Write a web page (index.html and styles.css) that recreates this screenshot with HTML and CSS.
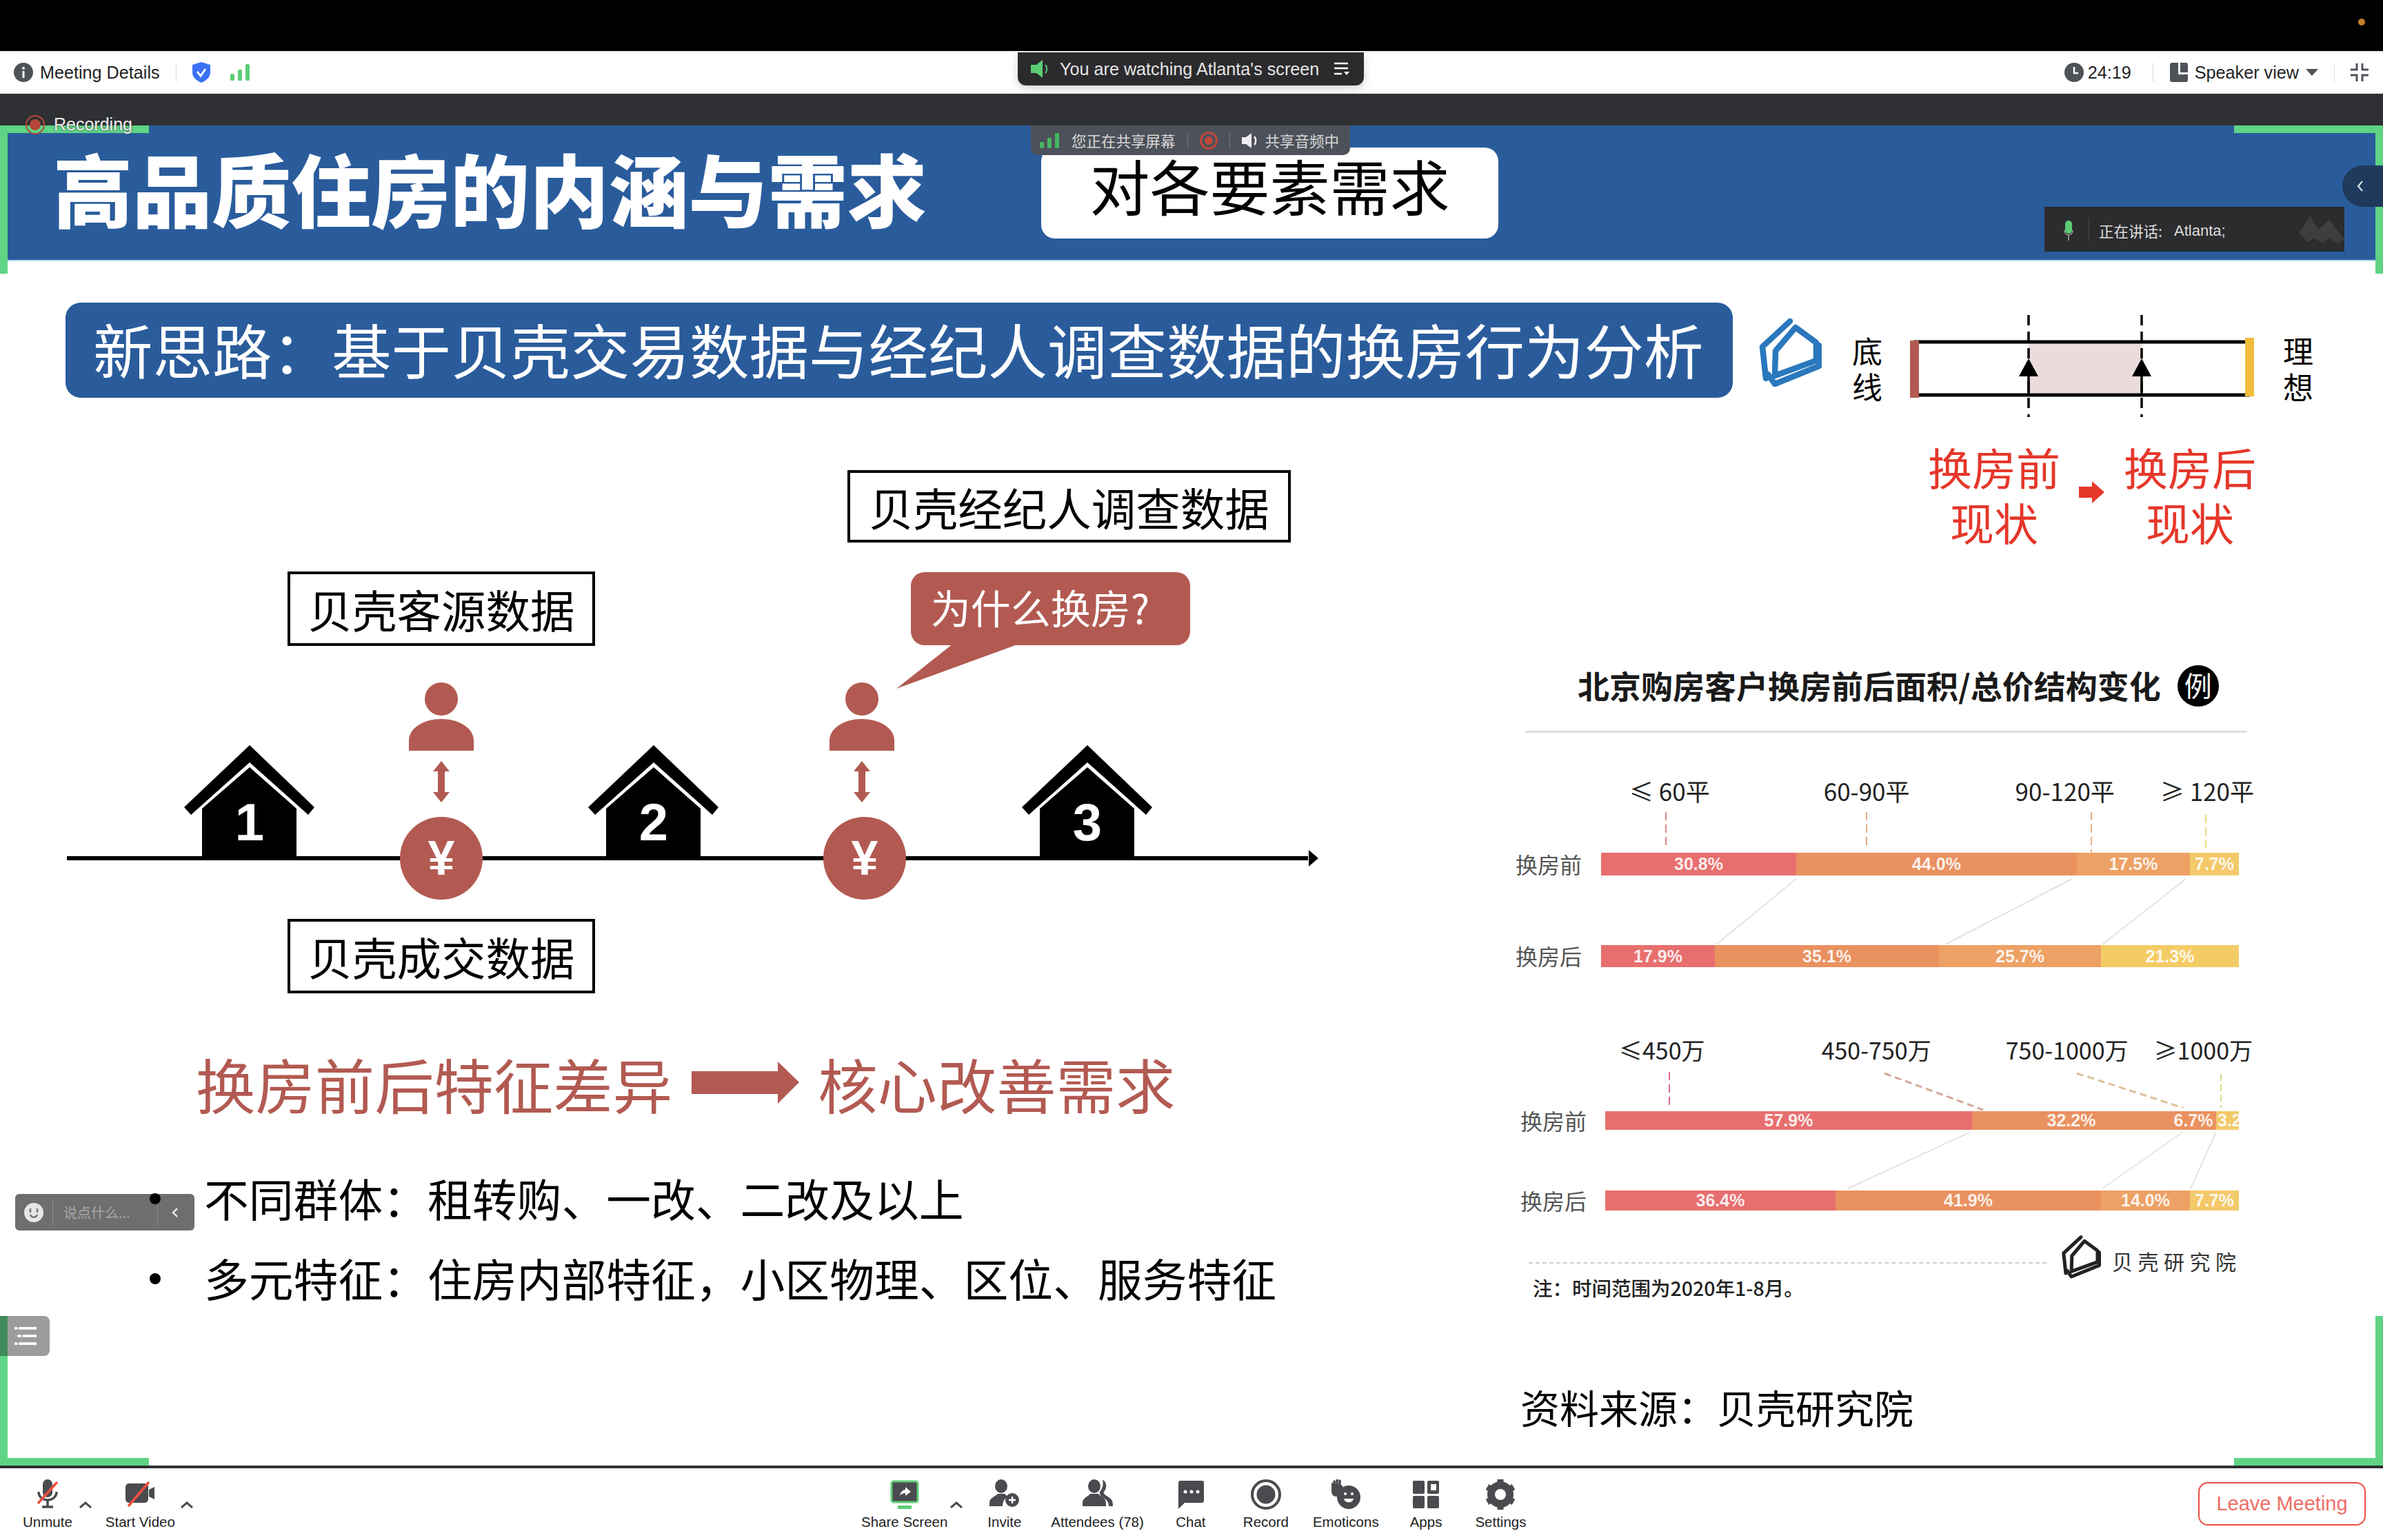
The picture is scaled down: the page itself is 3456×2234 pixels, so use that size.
FILE: index.html
```html
<!DOCTYPE html>
<html>
	<head>
		<meta charset="utf-8">
		<title>Meeting</title>
		<link rel="stylesheet" href="styles.css">
	</head>
	<body>
		<div class="menubar"><span class="cam-dot"></span></div>

		<div class="topbar">
			<div class="top-left">
				<svg class="ico-28" viewBox="0 0 28 28"><circle cx="14" cy="14" r="14" fill="#4f5259"/><rect x="12.5" y="12" width="3" height="10" fill="#fff"/><circle cx="14" cy="8" r="2" fill="#fff"/></svg>
				<span class="top-text details">Meeting Details</span>
				<span class="top-sep"></span>
				<svg class="ico-28 shield" viewBox="0 0 28 30"><path d="M14 0l13 4v11c0 7-6 12-13 15C7 27 1 22 1 15V4z" fill="#3b72f5"/><path d="M8 14l5 6 7-10" fill="none" stroke="#fff" stroke-width="3"/></svg>
				<svg class="ico-28 signal" viewBox="0 0 28 24"><rect x="0" y="14" width="6" height="10" rx="2" fill="#5ccd75"/><rect x="11" y="8" width="6" height="16" rx="2" fill="#5ccd75"/><rect x="22" y="0" width="6" height="24" rx="2" fill="#5ccd75"/></svg>
			</div>
			<div class="watching">
				<svg class="watch-spk" viewBox="0 0 28 26"><path d="M0 7h8l9-7v26l-9-7H0z" fill="#5ccd75"/><path d="M21 7c3 3 3 9 0 12" fill="none" stroke="#5ccd75" stroke-width="2"/></svg>
				<span class="watch-text">You are watching Atlanta's screen</span>
				<svg class="watch-menu" viewBox="0 0 24 20"><path d="M2 2h20M2 9h20M2 17h11" stroke="#fff" stroke-width="2.5"/><path d="M16 14h8l-4 5z" fill="#fff"/></svg>
			</div>
			<div class="top-right">
				<svg class="ico-28" viewBox="0 0 28 28"><circle cx="14" cy="14" r="14" fill="#4f5259"/><path d="M14 6v9h6" fill="none" stroke="#fff" stroke-width="2.5"/></svg>
				<span class="top-text clock">24:19</span>
				<span class="top-sep sep-clock"></span>
				<svg class="ico-28 view-ico" viewBox="0 0 26 28"><rect width="26" height="28" rx="3" fill="#4f5259"/><path d="M12 0h3v14h11v3H12z" fill="#fff"/></svg>
				<span class="top-text view">Speaker view</span>
				<span class="view-caret"></span>
				<span class="top-sep sep-view"></span>
				<svg class="ico-28 exit-full" viewBox="0 0 28 28"><path d="M10 1v9H1M18 1v9h9M10 27V18H1M18 27V18h9" fill="none" stroke="#4f5259" stroke-width="3"/></svg>
			</div>
		</div>

		<div class="strip"></div>

		<div class="stage">
			<div class="slide-head">
				<h1 class="slide-title">高品质住房的内涵与需求</h1>
				<div class="slide-pill">对各要素需求</div>
			</div>

			<div class="idea-row">
				<div class="idea-banner">新思路：基于贝壳交易数据与经纪人调查数据的换房行为分析</div>
				<svg class="beike-logo" viewBox="0 0 92 100">
					<g fill="none" stroke="#2a78bd" stroke-width="8.500" stroke-linejoin="round" stroke-linecap="round">
						<path d="M46 5L6 42l5 46"/>
						<path d="M54 14L84 36V62L24 84 25 48z"/>
						<path d="M14 82l10 14 64-26V40"/>
					</g>
				</svg>
				<div class="gauge-word word-low">底<br>线</div>
				<svg class="gauge" viewBox="2765 439 510 138">
					<rect x="2941" y="497" width="164" height="74" fill="#ebdcdc"/>
					<path d="M2775 496H3262M2775 573H3262" stroke="#000" stroke-width="5"/>
					<rect x="2769" y="494" width="13" height="83" fill="#b25a52"/>
					<rect x="3255" y="490" width="13" height="85" fill="#f2bc3b"/>
					<path d="M2941 457V605M3105 457V605" stroke="#000" stroke-width="3.5" stroke-dasharray="15 9"/>
					<path d="M2941 546V573M3105 546V573" stroke="#000" stroke-width="3.5"/>
					<path d="M2941 520l14 26h-28zM3105 520l14 26h-28z" fill="#000"/>
				</svg>
				<div class="gauge-word word-high">理<br>想</div>
			</div>

			<div class="slide-body">
				<div class="left-col">
					<div class="timeline">
						<svg class="timeline-art" viewBox="0 577 2190 864">
							<defs>
								<g id="house">
									<path d="M0 0L94 90 85 101 0 25-85 101-95 90z" fill="#000"/>
									<path d="M0 32L68 92V163H-69V92z" fill="#000"/>
								</g>
								<g id="person">
									<ellipse cx="0" cy="0" rx="24" ry="24" fill="#b25a52"/>
									<path d="M-47 75V60C-47 42-25 29 0 29S47 42 47 60V75z" fill="#b25a52"/>
								</g>
								<path id="updown" d="M0 0l12 15H5V45H12L0 60-12 45H-5V15H-12z" fill="#b25a52"/>
							</defs>
							<path d="M97 1245H1897" stroke="#000" stroke-width="6"/>
							<path d="M1912 1245l-14-12v24z" fill="#000"/>
							<use href="#house" x="362" y="1081"/>
							<use href="#house" x="948" y="1081"/>
							<use href="#house" x="1577" y="1081"/>
							<text class="house-num" x="362" y="1219">1</text>
							<text class="house-num" x="948" y="1219">2</text>
							<text class="house-num" x="1577" y="1219">3</text>
							<use href="#person" x="640" y="1014"/>
							<use href="#person" x="1250" y="1014"/>
							<use href="#updown" x="640" y="1104"/>
							<use href="#updown" x="1250" y="1104"/>
							<circle cx="640" cy="1245" r="60" fill="#b25a52"/>
							<circle cx="1254" cy="1245" r="60" fill="#b25a52"/>
							<text class="yen" x="640" y="1269">¥</text>
							<text class="yen" x="1254" y="1269">¥</text>
							<path d="M1387 930L1300 999 1489 930z" fill="#b25a52"/>
						</svg>
						<div class="data-box box-agent">贝壳经纪人调查数据</div>
						<div class="data-box box-client">贝壳客源数据</div>
						<div class="data-box box-deal">贝壳成交数据</div>
						<div class="bubble">为什么换房?</div>
					</div>

					<div class="gap-line">
						<span>换房前后特征差异</span>
						<svg class="gap-arrow" viewBox="0 0 156 61"><path d="M0 14H125V0L156 30 125 61V47H0z" fill="#b25a52"/></svg>
						<span>核心改善需求</span>
					</div>

					<ul class="points">
						<li>不同群体：租转购、一改、二改及以上</li>
						<li>多元特征：住房内部特征，小区物理、区位、服务特征</li>
					</ul>
				</div>

				<div class="right-col">
					<div class="change-row">
						<div class="change-word">换房前<br>现状</div>
						<svg class="change-arrow" viewBox="0 0 37 32"><path d="M0 8H19V0L37 16 19 32V24H0z" fill="#e5372a"/></svg>
						<div class="change-word">换房后<br>现状</div>
					</div>

					<div class="chart-title">
						<span class="chart-name">北京购房客户换房前后面积/总价结构变化</span>
						<span class="chart-badge">例</span>
					</div>
					<div class="chart-rule"></div>

					<div class="range-row ranges-area">
						<span>≤ 60平</span><span>60-90平</span><span>90-120平</span><span>≥ 120平</span>
					</div>
					<div class="bar-row row-a1">
						<span class="bar-name">换房前</span>
						<div class="bar">
							<span class="seg c1" style="width:283px">30.8%</span>
							<span class="seg c2" style="width:407px">44.0%</span>
							<span class="seg c3" style="width:164px">17.5%</span>
							<span class="seg c4" style="width:71px">7.7%</span>
						</div>
					</div>
					<div class="bar-row row-a2">
						<span class="bar-name">换房后</span>
						<div class="bar">
							<span class="seg c1" style="width:165px">17.9%</span>
							<span class="seg c2" style="width:325px">35.1%</span>
							<span class="seg c3" style="width:235px">25.7%</span>
							<span class="seg c5" style="width:200px">21.3%</span>
						</div>
					</div>

					<div class="range-row ranges-price">
						<span>≤450万</span><span>450-750万</span><span>750-1000万</span><span>≥1000万</span>
					</div>
					<div class="bar-row bar-narrow row-b1">
						<span class="bar-name">换房前</span>
						<div class="bar">
							<span class="seg c1" style="width:532px">57.9%</span>
							<span class="seg c2" style="width:288px">32.2%</span>
							<span class="seg c2" style="width:66px">6.7%</span>
							<span class="seg c4 seg-cut" style="width:33px">3.2%</span>
						</div>
					</div>
					<div class="bar-row bar-narrow row-b2">
						<span class="bar-name">换房后</span>
						<div class="bar">
							<span class="seg c1" style="width:334px">36.4%</span>
							<span class="seg c2" style="width:385px">41.9%</span>
							<span class="seg c3" style="width:129px">14.0%</span>
							<span class="seg c4" style="width:71px">7.7%</span>
						</div>
					</div>

					<div class="chart-foot">
						<span class="foot-dash"></span>
						<svg class="foot-logo" viewBox="0 0 92 100">
							<g fill="none" stroke="#222" stroke-width="8" stroke-linejoin="round" stroke-linecap="round">
								<path d="M46 5L6 42l5 46"/>
								<path d="M54 14L84 36V62L24 84 25 48z"/>
								<path d="M14 82l10 14 64-26V40"/>
							</g>
						</svg>
						<span class="foot-name">贝壳研究院</span>
					</div>
					<div class="chart-note">注：时间范围为2020年1-8月。</div>
					<div class="chart-source">资料来源：贝壳研究院</div>

					<!-- leader lines sit over the bars, coordinates are screen px -->
					<svg class="leaders" viewBox="2190 577 1266 1549">
						<path d="M2416 1178V1232" stroke="#e08a8a" stroke-width="2" stroke-dasharray="12 6"/>
						<path d="M2707 1178V1228" stroke="#e0a880" stroke-width="2" stroke-dasharray="12 6"/>
						<path d="M3033 1178V1236" stroke="#e8ae84" stroke-width="2" stroke-dasharray="12 6"/>
						<path d="M3199 1182V1232" stroke="#eed77a" stroke-width="2" stroke-dasharray="12 6"/>
						<path d="M2605 1275L2489 1370M3005 1275L2821 1370M3170 1275L3049 1370" stroke="#e4e4e4" stroke-width="2" fill="none"/>
						<path d="M2421 1555V1604" stroke="#e06a8a" stroke-width="2" stroke-dasharray="12 6"/>
						<path d="M2733 1557L2876 1610" stroke="#d6a99a" stroke-width="3" stroke-dasharray="10 6"/>
						<path d="M3012 1557L3166 1607" stroke="#dcc09a" stroke-width="3" stroke-dasharray="10 6"/>
						<path d="M3221 1558V1607" stroke="#d5e08a" stroke-width="2" stroke-dasharray="10 5"/>
						<path d="M2858 1642L2680 1724M3166 1642L3049 1724M3214 1642L3177 1724" stroke="#e4e4e4" stroke-width="2" fill="none"/>
					</svg>
				</div>
			</div>

			<!-- zoom overlays on top of the shared slide -->
			<span class="corner corner-tl"></span>
			<span class="corner corner-tr"></span>
			<span class="corner corner-bl"></span>
			<span class="corner corner-br"></span>

			<div class="recording">
				<svg class="rec-ico" viewBox="0 0 28 28"><circle cx="14" cy="14" r="13" fill="none" stroke="#b5473c" stroke-width="2"/><circle cx="14" cy="14" r="8" fill="#b5473c"/></svg>
				<span>Recording</span>
			</div>

			<div class="share-tag">
				<svg class="share-signal" viewBox="0 0 28 22"><rect x="0" y="13" width="6" height="9" rx="1" fill="#45b761"/><rect x="11" y="7" width="6" height="15" rx="1" fill="#45b761"/><rect x="22" y="0" width="6" height="22" rx="1" fill="#45b761"/></svg>
				<span class="share-text">您正在共享屏幕</span>
				<span class="share-sep"></span>
				<svg class="share-rec" viewBox="0 0 26 26"><circle cx="13" cy="13" r="11.5" fill="none" stroke="#c0473c" stroke-width="3"/><circle cx="13" cy="13" r="6" fill="#c0473c"/></svg>
				<span class="share-sep"></span>
				<svg class="share-spk" viewBox="0 0 24 22"><path d="M0 6h6l8-6v22l-8-6H0z" fill="#eee"/><path d="M18 5c3 3 3 9 0 12" fill="none" stroke="#eee" stroke-width="2.5"/></svg>
				<span class="share-text">共享音频中</span>
			</div>

			<div class="side-tab"><svg viewBox="0 0 10 18"><path d="M8 2L2 9l6 7" fill="none" stroke="#dfe6ee" stroke-width="2"/></svg></div>

			<div class="speaking">
				<svg class="speak-mic" viewBox="0 0 14 30"><rect x="2" y="0" width="10" height="19" rx="5" fill="#5ccd75"/><path d="M1 14c0 9 12 9 12 0M7 22v7" fill="none" stroke="#aaa" stroke-width="1.5"/></svg>
				<span class="speak-sep"></span>
				<span class="speak-text">正在讲话:</span>
				<span class="speak-text speak-name">Atlanta;</span>
				<svg class="speak-blur" viewBox="0 0 66 40"><path d="M0 26L16 0l12 20L44 6l22 28-10 6-12-8-10 8-12-8-8 6z" fill="#3e3e40"/></svg>
			</div>

			<div class="say-panel">
				<svg class="say-face" viewBox="0 0 28 28"><circle cx="14" cy="14" r="14" fill="#e6e6e6"/><path d="M9 8v6M19 8v6M9 17c2 5 8 5 10 0" fill="none" stroke="#777" stroke-width="2.5"/></svg>
				<span class="say-sep"></span>
				<span class="say-text">说点什么...</span>
				<span class="say-sep"></span>
				<svg class="say-chev" viewBox="0 0 10 16"><path d="M8 2L2 8l6 6" fill="none" stroke="#e6e6e6" stroke-width="2.5"/></svg>
			</div>

			<div class="list-btn">
				<svg viewBox="0 0 34 30"><path d="M0 3h3M8 3h26M6 15h3M14 15h20M0 27h3M8 27h26" stroke="#fff" stroke-width="4" stroke-linecap="round"/></svg>
			</div>
		</div>

		<div class="toolbar-rule"></div>

		<div class="toolbar">
			<div class="tools-left">
				<div class="tool tool-unmute">
					<svg class="tool-ico" viewBox="0 0 44 44"><rect x="15" y="0" width="14" height="26" rx="7" fill="#4a4b4f"/><path d="M9 18c0 16 26 16 26 0M22 30v9M14 40h16" fill="none" stroke="#4a4b4f" stroke-width="3.5"/><path d="M8 35L36 4" stroke="#ee4f3e" stroke-width="3.5"/></svg>
					<span class="tool-label">Unmute</span>
				</div>
				<svg class="caret caret-first" viewBox="0 0 20 10"><path d="M2 9l8-7 8 7" fill="none" stroke="#4a4b4f" stroke-width="3"/></svg>
				<div class="tool tool-video">
					<svg class="tool-ico" viewBox="0 0 44 44"><rect x="1" y="6" width="33" height="28" rx="5" fill="#4a4b4f"/><path d="M35 15l8-4v18l-8-4z" fill="#4a4b4f"/><path d="M5 39L35 4" stroke="#ee4f3e" stroke-width="3.5"/></svg>
					<span class="tool-label">Start Video</span>
				</div>
				<svg class="caret caret-next" viewBox="0 0 20 10"><path d="M2 9l8-7 8 7" fill="none" stroke="#4a4b4f" stroke-width="3"/></svg>
			</div>

			<div class="tools-mid">
				<div class="tool tool-share">
					<svg class="tool-ico" viewBox="0 0 44 44"><rect x="3" y="3" width="38" height="30" rx="3" fill="#4a4b4f" stroke="#5ccd75" stroke-width="3"/><path d="M15 24c1-6 5-9 8-9v-4l8 7-8 6v-4c-3 0-6 1-8 4z" fill="#fff"/><rect x="12" y="38" width="20" height="5" rx="1" fill="#5ccd75"/></svg>
					<span class="tool-label">Share Screen</span>
				</div>
				<svg class="caret caret-share" viewBox="0 0 20 10"><path d="M2 9l8-7 8 7" fill="none" stroke="#4a4b4f" stroke-width="3"/></svg>
				<div class="tool tool-invite">
					<svg class="tool-ico" viewBox="0 0 44 44"><ellipse cx="17" cy="10" rx="9" ry="10" fill="#4a4b4f"/><path d="M0 39V34C0 27 8 25 12 21h10c2 2 3 3 5 4-4 2-8 6-8 14z" fill="#4a4b4f"/><circle cx="33" cy="30" r="10" fill="#4a4b4f"/><path d="M33 25v10M28 30h10" stroke="#fff" stroke-width="2.5"/></svg>
					<span class="tool-label">Invite</span>
				</div>
				<div class="tool tool-people">
					<svg class="tool-ico" viewBox="0 0 44 44"><ellipse cx="17" cy="10" rx="9" ry="10" fill="#4a4b4f"/><path d="M0 39V34C0 27 8 25 11 21h12c3 4 11 6 11 13v5z" fill="#4a4b4f"/><path d="M29 1c6 1 7 12 2 17-2 3 3 5 7 8 5 3 6 7 6 13h-6c0-7-4-10-9-13-5-4-5-7-2-11 3-4 3-9 2-14z" fill="#4a4b4f"/></svg>
					<span class="tool-label">Attendees (78)</span>
				</div>
				<div class="tool tool-chat">
					<svg class="tool-ico" viewBox="0 0 44 44"><path d="M7 2h31c2 0 3 1 3 3v26c0 2-1 3-3 3H13L4 43V5c0-2 1-3 3-3z" fill="#4a4b4f"/><circle cx="14" cy="18" r="2.5" fill="#fff"/><circle cx="23" cy="18" r="2.5" fill="#fff"/><circle cx="32" cy="18" r="2.5" fill="#fff"/></svg>
					<span class="tool-label">Chat</span>
				</div>
				<div class="tool tool-record">
					<svg class="tool-ico" viewBox="0 0 44 44"><circle cx="22" cy="22" r="20" fill="none" stroke="#4a4b4f" stroke-width="4"/><circle cx="22" cy="22" r="13.5" fill="#4a4b4f"/></svg>
					<span class="tool-label">Record</span>
				</div>
				<div class="tool tool-emoji">
					<svg class="tool-ico" viewBox="0 0 44 44"><circle cx="26" cy="26" r="17" fill="#4a4b4f"/><path d="M1 5v12c0 5 3 8 7 8h4c1-4 3-8 5-10V9" fill="#4a4b4f"/><path d="M5 3v10M9 1v12M13 2v11" stroke="#4a4b4f" stroke-width="3.5" stroke-linecap="round"/><circle cx="21" cy="21" r="2" fill="#fff"/><circle cx="31" cy="21" r="2" fill="#fff"/><path d="M19 28h14c-1 7-13 7-14 0z" fill="#fff"/></svg>
					<span class="tool-label">Emoticons</span>
				</div>
				<div class="tool tool-apps">
					<svg class="tool-ico" viewBox="0 0 44 44"><rect x="3" y="2" width="17" height="19" rx="2" fill="#4a4b4f"/><rect x="24" y="2" width="17" height="19" rx="2" fill="#4a4b4f"/><rect x="29" y="7" width="8" height="9" fill="#fff"/><rect x="3" y="24" width="17" height="18" rx="2" fill="#4a4b4f"/><rect x="24" y="24" width="17" height="18" rx="2" fill="#4a4b4f"/></svg>
					<span class="tool-label">Apps</span>
				</div>
				<div class="tool tool-settings">
					<svg class="tool-ico" viewBox="0 0 44 44"><circle cx="22" cy="22" r="13.5" fill="none" stroke="#4a4b4f" stroke-width="11"/><path d="M22 0v7M22 37v7M3 11l6 3.500M35 29.500l6 3.500M3 33l6-3.500M35 14.500l6-3.500" stroke="#4a4b4f" stroke-width="9"/></svg>
					<span class="tool-label">Settings</span>
				</div>
			</div>

			<button class="leave-btn">Leave Meeting</button>
		</div>
	</body>
</html>
```

FILE: styles.css
```css
html, body {
	width: 3456px;
	height: 2234px;
	overflow: hidden;
}

body {
	margin: 0;
	padding: 0;
	background: #fff;
	font-family: "Noto Sans CJK SC", "Liberation Sans", sans-serif;
	color: #000;
}

/* top of the zoom window */

.menubar {
	height: 74px;
	background: #000;
	display: flex;
	justify-content: flex-end;
}

.cam-dot {
	width: 10px;
	height: 10px;
	border-radius: 50%;
	background: #c47e2b;
	margin: 27px 26px 0 0;
}

.topbar {
	box-sizing: border-box;
	height: 62px;
	border-top: 2px solid #eeeef2;
	border-bottom: 2px solid #eeeef2;
	display: flex;
	justify-content: space-between;
	align-items: center;
	position: relative;
	font-family: "Liberation Sans", sans-serif;
}

.top-left, .top-right {
	display: flex;
	align-items: center;
}

.top-left {
	padding-left: 20px;
}

.top-right {
	padding-right: 18px;
}

.top-text {
	font-size: 25.2px;
	line-height: 30px;
	color: #222;
	white-space: nowrap;
}

.ico-28 {
	width: 28px;
	height: 28px;
	flex: none;
}

.details { margin-left: 10px; }
.top-sep {
	width: 1px;
	height: 28px;
	background: #ddd;
	margin-left: 23px;
}
.shield { height: 30px; margin-left: 22px; }
.signal { height: 24px; margin-left: 28px; }
.clock { margin-left: 6px; }
.sep-clock { margin-left: 31px; }
.view-ico { margin-left: 24px; width: 26px; }
.view { margin-left: 10px; }
.view-caret {
	width: 0;
	height: 0;
	border-left: 9px solid transparent;
	border-right: 9px solid transparent;
	border-top: 10px solid #4f5259;
	margin-left: 10px;
}
.sep-view { margin-left: 23px; }
.exit-full { margin-left: 22px; margin-right: 2px; }

.watching {
	position: absolute;
	left: 1476px;
	top: 0;
	box-sizing: border-box;
	width: 502px;
	height: 48px;
	background: #2b2b2d;
	border-radius: 0 0 12px 12px;
	box-shadow: 0 4px 14px rgba(0, 0, 0, 0.18);
	display: flex;
	align-items: center;
	padding-left: 19px;
}

.watch-spk { width: 28px; height: 26px; }

.watch-text {
	font-size: 25.2px;
	color: #e4e4e4;
	margin-left: 14px;
	white-space: nowrap;
}

.watch-menu { width: 24px; height: 20px; margin-left: 20px; }

.strip {
	height: 46px;
	background: #2f3033;
}

/* shared slide */

.stage {
	height: 1944px;
	background: #fff;
	position: relative;
}

.slide-head {
	box-sizing: border-box;
	height: 197px;
	background: #2a5c9c;
	border-bottom: 2px solid #b9dcef;
	display: flex;
	align-items: center;
	padding-left: 77px;
}

.slide-title {
	margin: 0 0 18px;
	font-size: 115.2px;
	font-weight: 900;
	line-height: 132px;
	color: #fff;
	white-space: nowrap;
}

.slide-pill {
	width: 663px;
	height: 132px;
	margin-left: 166px;
	background: #fff;
	border-radius: 20px;
	font-size: 87px;
	line-height: 108px;
	text-align: center;
}

.idea-row {
	display: flex;
	height: 138px;
	margin-top: 60px;
	padding-left: 95px;
}

.idea-banner {
	width: 2418px;
	box-sizing: border-box;
	padding-left: 40px;
	background: #2a5c9c;
	border-radius: 22px;
	font-size: 86.5px;
	line-height: 134px;
	color: #fff;
	white-space: nowrap;
	flex: none;
}

.beike-logo {
	width: 92px;
	height: 100px;
	margin: 22px 0 0 37px;
	flex: none;
}

.gauge-word {
	font-size: 44px;
	line-height: 52px;
	margin-top: 43px;
	flex: none;
}

.word-low { margin-left: 44px; }
.word-high { margin-left: 35px; }

.gauge {
	width: 510px;
	height: 138px;
	margin-left: 36px;
	overflow: visible;
	flex: none;
}

.slide-body {
	display: grid;
	grid-template-columns: 2190px 1266px;
}

.left-col {
	min-width: 0;
}

.timeline {
	height: 864px;
	position: relative;
}

.timeline-art {
	position: absolute;
	left: 0;
	top: 0;
	width: 2190px;
	height: 864px;
}

.house-num, .yen {
	font-family: "Liberation Sans", sans-serif;
	font-weight: bold;
	fill: #fff;
	text-anchor: middle;
}

.house-num { font-size: 76px; }
.yen { font-size: 70px; }

.data-box {
	position: absolute;
	box-sizing: border-box;
	border: 4px solid #000;
	background: #fff;
	font-size: 64.5px;
	display: flex;
	align-items: center;
	justify-content: center;
	white-space: nowrap;
}

.box-agent { left: 1229px; top: 105px; width: 643px; height: 105px; }
.box-client { left: 417px; top: 252px; width: 446px; height: 108px; }
.box-deal { left: 417px; top: 756px; width: 446px; height: 108px; }

.bubble {
	position: absolute;
	left: 1321px;
	top: 253px;
	box-sizing: border-box;
	width: 405px;
	height: 106px;
	padding-right: 30px;
	background: #b25a52;
	border-radius: 20px;
	color: #fff;
	font-size: 58px;
	line-height: 100px;
	text-align: center;
	white-space: nowrap;
}

.gap-line {
	display: flex;
	align-items: center;
	margin-top: 81px;
	padding-left: 284px;
	height: 100px;
	font-size: 86.4px;
	line-height: 100px;
	color: #b25a52;
	white-space: nowrap;
}

.gap-arrow {
	width: 156px;
	height: 61px;
	margin: 0 27px 4px 28px;
	flex: none;
}

.points {
	list-style: none;
	margin: 57px 0 0;
	padding: 0 0 0 296px;
	font-size: 64.8px;
	line-height: 116px;
	white-space: nowrap;
}

.points li {
	position: relative;
}

/* the first dot shows through the chat panel in the shot */
.points li:before {
	content: "";
	position: absolute;
	z-index: 2;
	left: -79px;
	top: 52px;
	width: 16px;
	height: 16px;
	border-radius: 50%;
	background: #000;
}

/* right column */

.right-col {
	position: relative;
	min-width: 0;
}

.change-row {
	display: flex;
	align-items: center;
	margin-top: 59px;
	padding-left: 606px;
}

.change-word {
	width: 192px;
	font-size: 64px;
	line-height: 80px;
	color: #e5372a;
	text-align: center;
	flex: none;
}

.change-arrow {
	width: 37px;
	height: 32px;
	margin: 0 28px 4px 27px;
	flex: none;
}

.chart-title {
	display: flex;
	align-items: center;
	height: 60px;
	margin-top: 169px;
	padding-left: 98px;
	font-size: 46px;
	font-weight: 700;
	color: #1a1a1a;
	white-space: nowrap;
}

.chart-name { margin-top: -4px; }

.chart-badge {
	width: 60px;
	height: 60px;
	margin-left: 24px;
	border-radius: 50%;
	background: #000;
	color: #fff;
	font-size: 40px;
	font-weight: 400;
	line-height: 56px;
	text-align: center;
}

.chart-rule {
	width: 1047px;
	height: 3px;
	margin: 35px 0 0 22px;
	background: #ddd;
}

.range-row {
	display: flex;
	line-height: 40px;
	color: #222;
	white-space: nowrap;
}

.ranges-area { font-size: 35px; margin-top: 64px; padding-left: 173px; }
.ranges-area span:nth-child(2) { margin-left: 165px; }
.ranges-area span:nth-child(3) { margin-left: 153px; }
.ranges-area span:nth-child(4) { margin-left: 66px; }

.ranges-price { font-size: 34px; margin-top: 100px; padding-left: 158px; }
.ranges-price span:nth-child(2) { margin-left: 169px; }
.ranges-price span:nth-child(3) { margin-left: 108px; }
.ranges-price span:nth-child(4) { margin-left: 37px; }

.bar-row {
	display: flex;
	align-items: center;
	padding-left: 8px;
}

.bar-narrow {
	padding-left: 15px;
}

.bar-name {
	width: 124px;
	margin-bottom: 2px;
	font-size: 32px;
	color: #555;
	flex: none;
	line-height: 32px;
	white-space: nowrap;
}

.bar-narrow .bar-name { width: 123px; }

.bar {
	display: flex;
	height: 100%;
}

.row-a1 { margin-top: 70px; height: 33px; }
.row-a2 { margin-top: 101px; height: 32px; }
.row-b1 { margin-top: 69px; height: 27px; }
.row-b2 { margin-top: 88px; height: 29px; }

.seg {
	display: flex;
	align-items: center;
	justify-content: center;
	overflow: hidden;
	font-family: "Liberation Sans", sans-serif;
	font-size: 25px;
	font-weight: bold;
	color: rgba(255, 255, 255, 0.88);
	white-space: nowrap;
	flex: none;
}

.seg-cut {
	justify-content: flex-start;
	padding-left: 2px;
	box-sizing: border-box;
}

.c1 { background: #e86f6f; }
.c2 { background: #ea9160; }
.c3 { background: #eda165; }
.c4 { background: #f3c96a; }
.c5 { background: #f4cc66; }

.chart-foot {
	display: flex;
	height: 59px;
	margin-top: 35px;
	padding-left: 27px;
}

.foot-dash {
	width: 751px;
	height: 0;
	margin-top: 40px;
	border-top: 2px dashed #ccc;
	flex: none;
}

.foot-logo {
	width: 58px;
	height: 64px;
	margin-left: 21px;
	flex: none;
}

.foot-name {
	margin: 16px 0 0 16px;
	font-size: 30px;
	line-height: 44px;
	letter-spacing: 7.5px;
	color: #333;
	white-space: nowrap;
}

.chart-note {
	padding-left: 33px;
	font-size: 28.5px;
	font-weight: 500;
	line-height: 36px;
	color: #222;
	white-space: nowrap;
}

.chart-source {
	margin-top: 114px;
	padding-left: 15px;
	font-size: 57px;
	line-height: 80px;
	white-space: nowrap;
}

.leaders {
	position: absolute;
	left: 0;
	top: 0;
	width: 1266px;
	height: 1549px;
}

/* things the client draws above the slide */

.corner {
	position: absolute;
	width: 216px;
	height: 215px;
	box-sizing: border-box;
	border: 0 solid #5fd485;
}

.corner-tl { left: 0; top: 0; border-width: 11px 0 0 11px; }
.corner-tr { right: 0; top: 0; border-width: 11px 11px 0 0; }
.corner-bl { left: 0; bottom: 0; height: 217px; border-width: 0 0 11px 11px; }
.corner-br { right: 0; bottom: 0; height: 217px; border-width: 0 11px 11px 0; }

.recording {
	position: absolute;
	left: 37px;
	top: -16px;
	display: flex;
	align-items: center;
	font-family: "Liberation Sans", sans-serif;
	font-size: 25px;
	color: #eee;
	text-shadow: 0 0 3px #333;
}

.rec-ico { width: 28px; height: 28px; margin-right: 13px; }

.share-tag {
	position: absolute;
	left: 1495px;
	top: 0;
	box-sizing: border-box;
	width: 463px;
	height: 43px;
	background: #4d5159;
	border-radius: 0 0 10px 10px;
	display: flex;
	align-items: center;
	padding-left: 13px;
}

.share-signal { width: 28px; height: 22px; }

.share-text {
	font-size: 21.5px;
	line-height: 30px;
	color: #d8d8d8;
	white-space: nowrap;
}

.share-tag .share-text:nth-of-type(1) { margin-left: 18px; }

.share-sep {
	width: 1px;
	height: 22px;
	background: #73777f;
	margin-left: 17px;
}

.share-rec { width: 26px; height: 26px; margin-left: 17px; }
.share-spk { width: 24px; height: 22px; margin: 0 10px 0 17px; }

.side-tab {
	position: absolute;
	right: 0;
	top: 58px;
	box-sizing: border-box;
	width: 59px;
	height: 60px;
	padding-right: 8px;
	background: #1f3a5c;
	border-radius: 30px 0 0 30px;
	display: flex;
	align-items: center;
	justify-content: center;
}

.side-tab svg { width: 10px; height: 18px; }

.speaking {
	position: absolute;
	left: 2965px;
	top: 118px;
	box-sizing: border-box;
	width: 435px;
	height: 65px;
	background: #2b2c2e;
	border-top: 1px solid #1d2a3a;
	border-bottom: 1px solid #1d2a3a;
	display: flex;
	align-items: center;
	padding-left: 28px;
}

.speak-mic { width: 14px; height: 30px; margin-top: 4px; }

.speak-sep {
	width: 1px;
	height: 34px;
	background: #48494b;
	margin: 0 14px 0 22px;
}

.speak-text {
	font-size: 21.5px;
	line-height: 30px;
	margin-top: 5px;
	color: #ddd;
	white-space: nowrap;
}

.speak-name {
	font-family: "Liberation Sans", sans-serif;
	font-size: 22px;
	margin-left: 17px;
}

.speak-blur { width: 66px; height: 40px; margin-left: auto; }

.say-panel {
	position: absolute;
	left: 22px;
	top: 1550px;
	box-sizing: border-box;
	width: 260px;
	height: 53px;
	background: #6e6e6e;
	border-radius: 6px;
	display: flex;
	align-items: center;
	padding-left: 13px;
}

.say-face { width: 28px; height: 28px; }

.say-sep {
	width: 1px;
	height: 38px;
	background: #8c8c8c;
	margin-left: 13px;
}

.say-text {
	width: 136px;
	margin-left: 15px;
	font-size: 20px;
	color: #a8a8a8;
	white-space: nowrap;
}

.say-panel .say-text + .say-sep { margin-left: 0; }

.say-chev { width: 10px; height: 16px; margin-left: 20px; }

.list-btn {
	position: absolute;
	left: 0;
	top: 1727px;
	width: 72px;
	height: 58px;
	background: #9c9c9c;
	border-radius: 0 8px 8px 0;
	overflow: hidden;
	display: flex;
	align-items: center;
	justify-content: flex-end;
	box-sizing: border-box;
}

.list-btn:before {
	content: "";
	position: absolute;
	left: 0;
	top: 0;
	width: 11px;
	height: 100%;
	background: #3e8a5a;
}

.list-btn svg { width: 32px; height: 28px; margin-right: 19px; }

/* bottom toolbar */

.toolbar-rule {
	height: 4px;
	background: #2f3033;
}

.toolbar {
	height: 104px;
	display: flex;
	font-family: "Liberation Sans", sans-serif;
	position: relative;
}

.tools-left, .tools-mid {
	display: flex;
	align-items: flex-start;
	padding-top: 16px;
}

.tools-left { padding-left: 33px; }
.tools-mid { position: absolute; left: 1249px; }

.tool {
	display: flex;
	flex-direction: column;
	align-items: center;
	flex: none;
}

.tool-ico {
	width: 44px;
	height: 44px;
}

.tool-label {
	font-size: 20.5px;
	line-height: 24px;
	margin-top: 6px;
	color: #222;
	white-space: nowrap;
}

.caret {
	width: 20px;
	height: 10px;
	margin-top: 32px;
	flex: none;
}

.caret-first { margin-left: 9px; }
.caret-next { margin-left: 7px; }
.tool-video { margin-left: 19px; }
.caret-share { margin-left: 3px; }
.tool-invite { margin-left: 35px; }
.tool-people { margin-left: 43px; }
.tool-chat { margin-left: 46px; }
.tool-record { margin-left: 54px; }
.tool-emoji { margin-left: 35px; }
.tool-apps { margin-left: 45px; }
.tool-settings { margin-left: 48px; }

.leave-btn {
	position: absolute;
	left: 3188px;
	top: 20px;
	width: 243px;
	height: 63px;
	background: #fff;
	border: 2.5px solid #eb5046;
	border-radius: 14px;
	font-family: "Liberation Sans", sans-serif;
	font-size: 29px;
	color: #ee6e66;
	padding: 0;
}
```
